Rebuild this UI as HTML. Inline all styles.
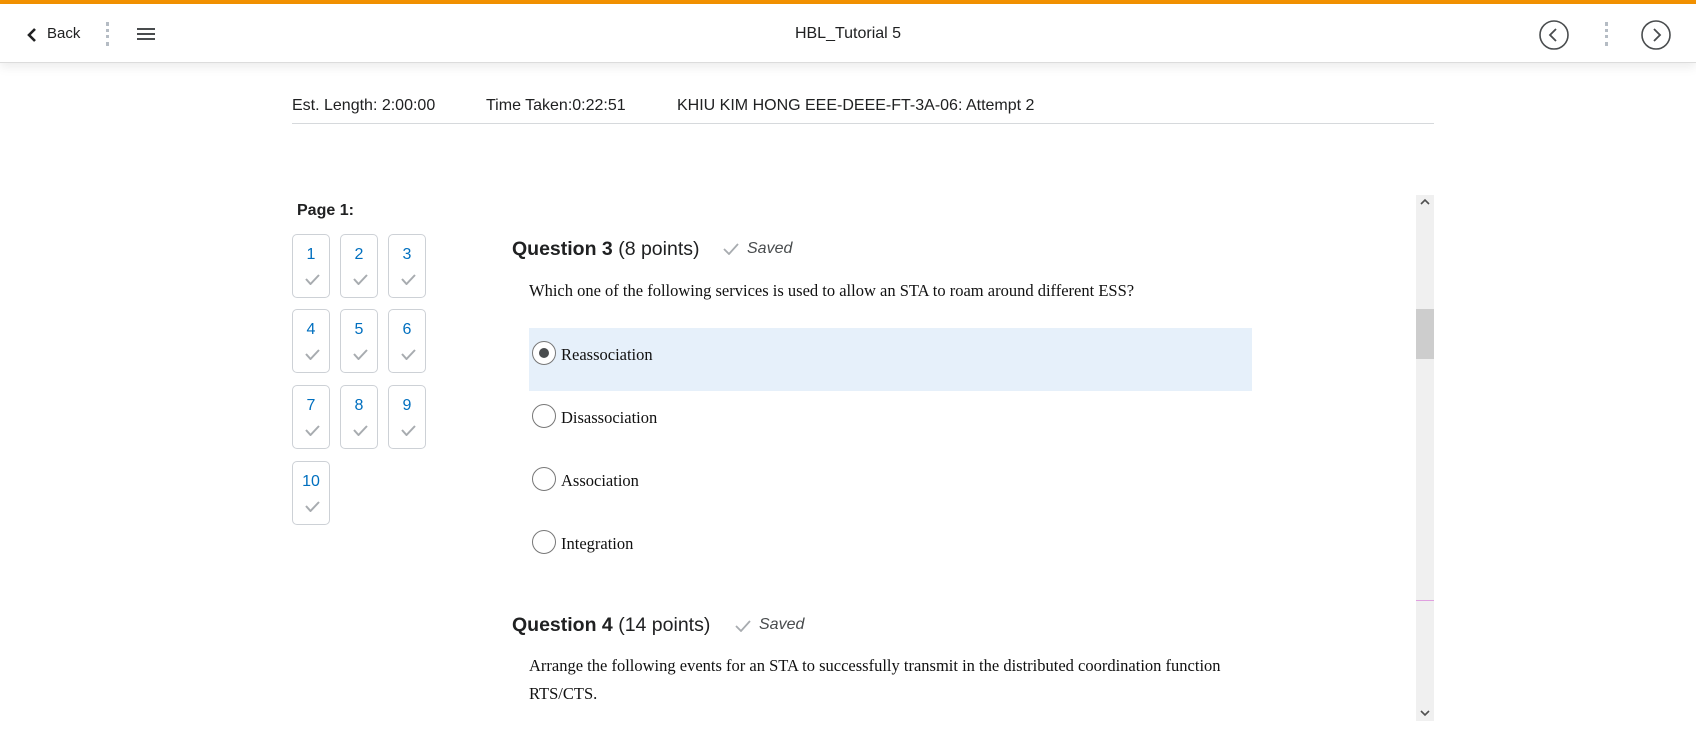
<!DOCTYPE html>
<html><head><meta charset="utf-8"><style>
*{margin:0;padding:0;box-sizing:border-box}
body{width:1696px;height:740px;overflow:hidden;background:#fff;font-family:"Liberation Sans",sans-serif;color:#202122;position:relative}
.abs{position:absolute}
.top{left:0;top:0;width:1696px;height:4px;background:#f39200}
.hdr{left:0;top:4px;width:1696px;height:59px;border-bottom:1px solid #dcdcdc;box-shadow:0 4px 10px rgba(0,0,0,0.08);background:#fff}
.dots{width:3px;border-left:3px dotted #b5bcc4;height:24px}
.info{top:97px;font-size:16px;color:#202122}
.tile{width:38px;height:64px;border:1px solid #cdd1d6;border-radius:5px;background:#fff}
.tile .n{position:absolute;top:11px;width:100%;text-align:center;color:#006fbf;font-size:16px}
.tile svg{position:absolute;left:12px;top:39px}
.qh{font-size:19.5px;color:#202122}
.serif{font-family:"Liberation Serif",serif;font-size:16.5px;color:#111}
.radio{width:24px;height:24px;border:1px solid #777;border-radius:50%;background:#fff}
</style></head><body>
<div class="abs top"></div>
<div class="abs hdr"></div>
<svg class="abs" style="left:26px;top:27px" width="12" height="16" viewBox="0 0 12 16"><path d="M9 2 L3 8 L9 14" fill="none" stroke="#202122" stroke-width="2.6"/></svg>
<div class="abs" style="left:47px;top:25px;font-size:15px">Back</div>
<div class="abs dots" style="left:106px;top:22px"></div>
<svg class="abs" style="left:137px;top:27px" width="18" height="14"><path d="M0 2H18M0 7H18M0 12H18" stroke="#494c4e" stroke-width="2"/></svg>
<div class="abs" style="left:0;width:1696px;top:25px;text-align:center;font-size:16px">HBL_Tutorial 5</div>
<svg class="abs" style="left:1539px;top:20px" width="30" height="30"><circle cx="15" cy="15" r="14" fill="none" stroke="#494c4e" stroke-width="1.6"/><path d="M17 9 L11 15 L17 21" fill="none" stroke="#494c4e" stroke-width="1.8"/></svg>
<div class="abs dots" style="left:1605px;top:22px"></div>
<svg class="abs" style="left:1641px;top:20px" width="30" height="30"><circle cx="15" cy="15" r="14" fill="none" stroke="#494c4e" stroke-width="1.6"/><path d="M13 9 L19 15 L13 21" fill="none" stroke="#494c4e" stroke-width="1.8"/></svg>

<div class="abs info" style="left:292px">Est. Length: 2:00:00</div>
<div class="abs info" style="left:486px">Time Taken:0:22:51</div>
<div class="abs info" style="left:677px">KHIU KIM HONG EEE-DEEE-FT-3A-06: Attempt 2</div>
<div class="abs" style="left:292px;top:123px;width:1142px;height:1px;background:#d6d9dc"></div>

<div class="abs" style="left:297px;top:202px;font-size:16px;font-weight:bold">Page 1:</div>
<div class="abs tile" style="left:292px;top:234px"><div class="n">1</div><svg width="15" height="11"><path d="M1 5 L5.5 10 L14 1" fill="none" stroke="#a8acb0" stroke-width="2"/></svg></div>
<div class="abs tile" style="left:340px;top:234px"><div class="n">2</div><svg width="15" height="11"><path d="M1 5 L5.5 10 L14 1" fill="none" stroke="#a8acb0" stroke-width="2"/></svg></div>
<div class="abs tile" style="left:388px;top:234px"><div class="n">3</div><svg width="15" height="11"><path d="M1 5 L5.5 10 L14 1" fill="none" stroke="#a8acb0" stroke-width="2"/></svg></div>
<div class="abs tile" style="left:292px;top:309px"><div class="n">4</div><svg width="15" height="11"><path d="M1 5 L5.5 10 L14 1" fill="none" stroke="#a8acb0" stroke-width="2"/></svg></div>
<div class="abs tile" style="left:340px;top:309px"><div class="n">5</div><svg width="15" height="11"><path d="M1 5 L5.5 10 L14 1" fill="none" stroke="#a8acb0" stroke-width="2"/></svg></div>
<div class="abs tile" style="left:388px;top:309px"><div class="n">6</div><svg width="15" height="11"><path d="M1 5 L5.5 10 L14 1" fill="none" stroke="#a8acb0" stroke-width="2"/></svg></div>
<div class="abs tile" style="left:292px;top:385px"><div class="n">7</div><svg width="15" height="11"><path d="M1 5 L5.5 10 L14 1" fill="none" stroke="#a8acb0" stroke-width="2"/></svg></div>
<div class="abs tile" style="left:340px;top:385px"><div class="n">8</div><svg width="15" height="11"><path d="M1 5 L5.5 10 L14 1" fill="none" stroke="#a8acb0" stroke-width="2"/></svg></div>
<div class="abs tile" style="left:388px;top:385px"><div class="n">9</div><svg width="15" height="11"><path d="M1 5 L5.5 10 L14 1" fill="none" stroke="#a8acb0" stroke-width="2"/></svg></div>
<div class="abs tile" style="left:292px;top:461px"><div class="n">10</div><svg width="15" height="11"><path d="M1 5 L5.5 10 L14 1" fill="none" stroke="#a8acb0" stroke-width="2"/></svg></div>

<div class="abs qh" style="left:512px;top:238px"><b>Question 3</b> (8 points)</div>
<svg class="abs" style="left:723px;top:243px" width="16" height="12"><path d="M1 6 L6 11 L15 1" fill="none" stroke="#a8acb0" stroke-width="1.8"/></svg>
<div class="abs" style="left:747px;top:240px;font-size:16px;font-style:italic;color:#494c4e">Saved</div>
<div class="abs serif" style="left:529px;top:281px">Which one of the following services is used to allow an STA to roam around different ESS?</div>
<div class="abs" style="left:529px;top:328px;width:723px;height:63px;background:#e6f0fa"></div>
<div class="abs radio" style="left:532px;top:341px"><div style="position:absolute;left:6px;top:6px;width:10px;height:10px;border-radius:50%;background:#494c4e"></div></div>
<div class="abs serif" style="left:561px;top:345px">Reassociation</div>
<div class="abs radio" style="left:532px;top:404px"></div>
<div class="abs serif" style="left:561px;top:408px">Disassociation</div>
<div class="abs radio" style="left:532px;top:467px"></div>
<div class="abs serif" style="left:561px;top:471px">Association</div>
<div class="abs radio" style="left:532px;top:530px"></div>
<div class="abs serif" style="left:561px;top:534px">Integration</div>

<div class="abs qh" style="left:512px;top:614px"><b>Question 4</b> (14 points)</div>
<svg class="abs" style="left:735px;top:620px" width="16" height="12"><path d="M1 6 L6 11 L15 1" fill="none" stroke="#a8acb0" stroke-width="1.8"/></svg>
<div class="abs" style="left:759px;top:616px;font-size:16px;font-style:italic;color:#494c4e">Saved</div>
<div class="abs serif" style="left:529px;top:656px">Arrange the following events for an STA to successfully transmit in the distributed coordination function</div>
<div class="abs serif" style="left:529px;top:684px">RTS/CTS.</div>

<div class="abs" style="left:1416px;top:195px;width:18px;height:526px;background:#f0f0f0"></div>
<div class="abs" style="left:1416px;top:309px;width:18px;height:50px;background:#cdcdcd"></div>
<div class="abs" style="left:1416px;top:600px;width:18px;height:1px;background:#e0a0e0"></div>
<svg class="abs" style="left:1420px;top:198px" width="10" height="8"><path d="M1 6 L5 2 L9 6" fill="none" stroke="#505050" stroke-width="1.6"/></svg>
<svg class="abs" style="left:1420px;top:709px" width="10" height="8"><path d="M1 2 L5 6 L9 2" fill="none" stroke="#505050" stroke-width="1.6"/></svg>
</body></html>
